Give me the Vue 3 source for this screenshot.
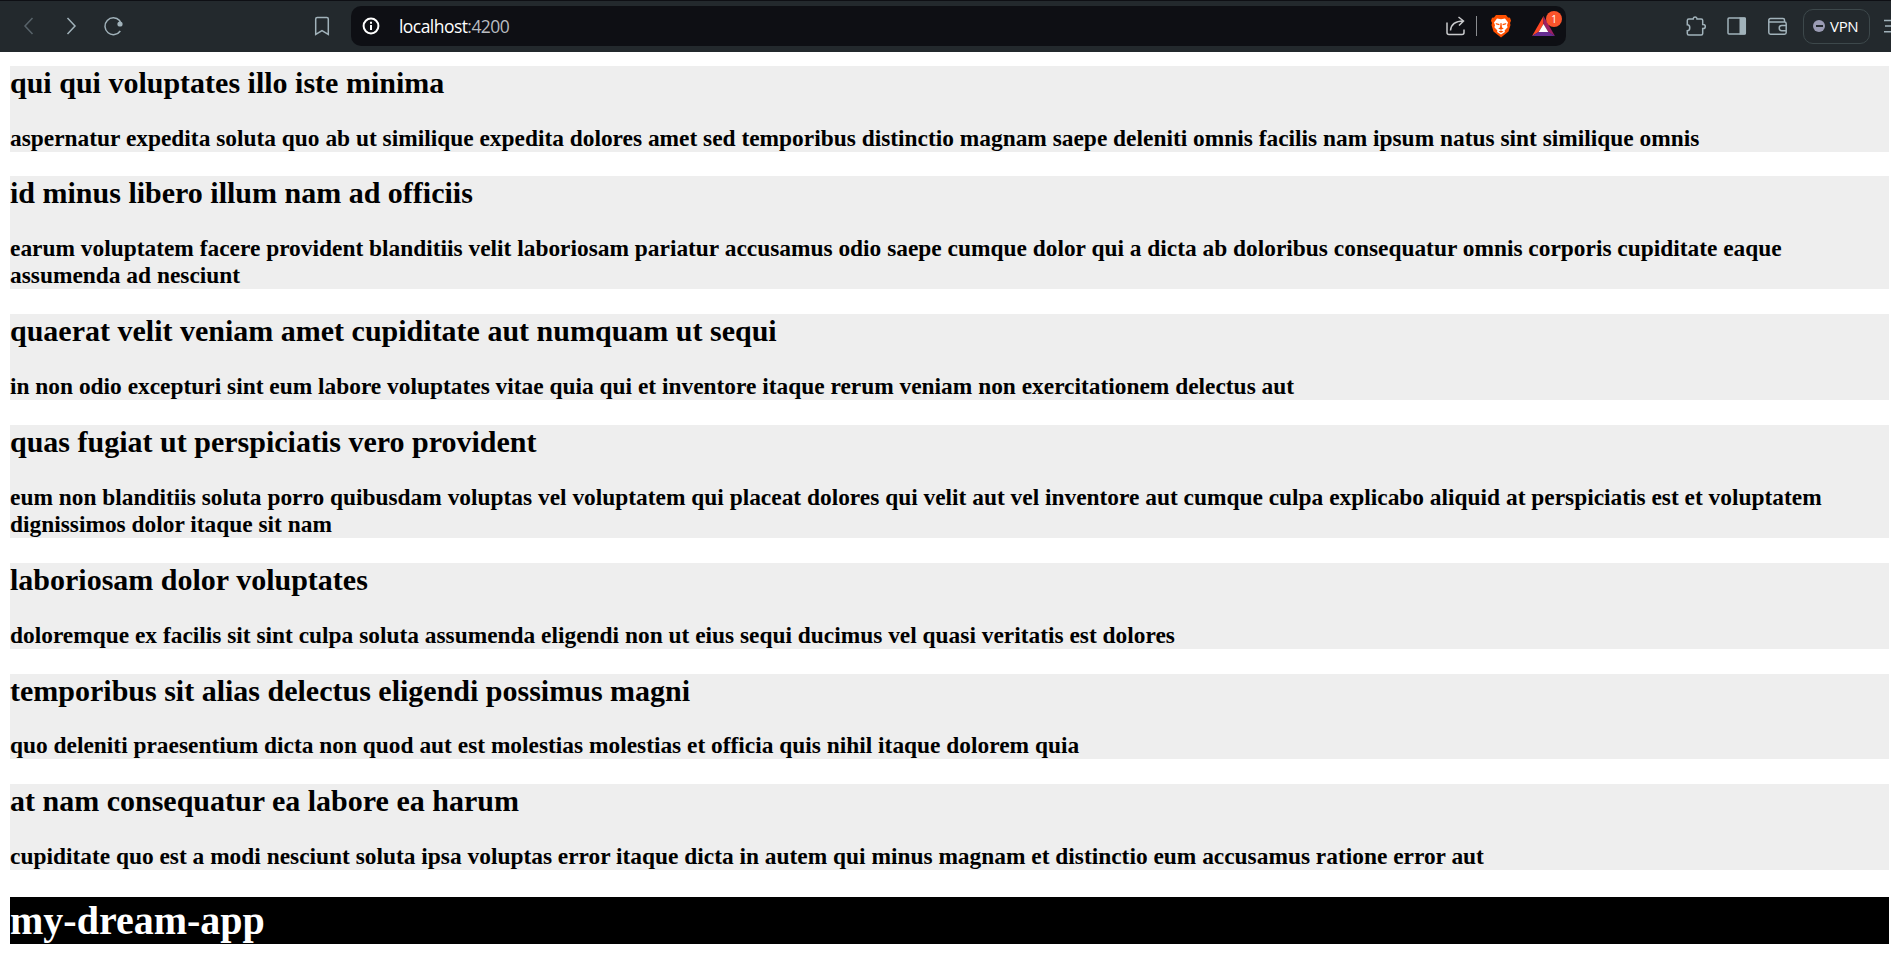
<script setup>
const posts = [
  { title: 'qui qui voluptates illo iste minima', body: 'aspernatur expedita soluta quo ab ut similique expedita dolores amet sed temporibus distinctio magnam saepe deleniti omnis facilis nam ipsum natus sint similique omnis' },
  { title: 'id minus libero illum nam ad officiis', body: 'earum voluptatem facere provident blanditiis velit laboriosam pariatur accusamus odio saepe cumque dolor qui a dicta ab doloribus consequatur omnis corporis cupiditate eaque assumenda ad nesciunt' },
  { title: 'quaerat velit veniam amet cupiditate aut numquam ut sequi', body: 'in non odio excepturi sint eum labore voluptates vitae quia qui et inventore itaque rerum veniam non exercitationem delectus aut' },
  { title: 'quas fugiat ut perspiciatis vero provident', body: 'eum non blanditiis soluta porro quibusdam voluptas vel voluptatem qui placeat dolores qui velit aut vel inventore aut cumque culpa explicabo aliquid at perspiciatis est et voluptatem dignissimos dolor itaque sit nam' },
  { title: 'laboriosam dolor voluptates', body: 'doloremque ex facilis sit sint culpa soluta assumenda eligendi non ut eius sequi ducimus vel quasi veritatis est dolores' },
  { title: 'temporibus sit alias delectus eligendi possimus magni', body: 'quo deleniti praesentium dicta non quod aut est molestias molestias et officia quis nihil itaque dolorem quia' },
  { title: 'at nam consequatur ea labore ea harum', body: 'cupiditate quo est a modi nesciunt soluta ipsa voluptas error itaque dicta in autem qui minus magnam et distinctio eum accusamus ratione error aut' },
]
</script>

<template>
  <div class="window">
    <header class="toolbar">
      <nav class="nav">
        <svg class="dim" width="20" height="24" viewBox="0 0 20 24"><path d="M13.500 4 6 12l7.500 8" /></svg>
        <svg width="20" height="24" viewBox="0 0 20 24"><path d="M6.500 4 14 12l-7.500 8" /></svg>
        <svg width="20" height="24" viewBox="0 0 20 24"><path d="M17.300 17A8.400 8.400 0 1 1 16.600 6.600L17.500 8.500" /><circle class="fill" cx="17" cy="10" r="2.600" /></svg>
      </nav>
      <svg class="bookmark" width="16" height="24" viewBox="0 0 16 24"><path d="M3.200 3.500h9.600q1.500 0 1.500 1.500v15.500L8 16.700l-6.300 3.800V5q0-1.500 1.500-1.500z" /></svg>
      <div class="address">
        <svg class="info" width="20" height="20" viewBox="0 0 20 20"><circle cx="10" cy="10" r="7.400" /><path d="M10 9v5M10 5.700v2" /></svg>
        <span class="url">localhost<span class="port">:4200</span></span>
        <svg class="share" width="22" height="22" viewBox="0 0 22 22"><path d="M2 7.500v10q0 2 2 2h13q2 0 2-2v-3M5.500 15.500C6 9.500 9.500 6 18.500 6M13.500 2l5 4-4.500 4.500" /></svg>
        <i class="divider"></i>
        <svg class="lion" width="22" height="24" viewBox="0 0 22 24">
          <path fill="#ff5000" d="M6 1h10l2 2.500 2 .2 1 3-1 2.300.5 2-2 6.500L11 23.500 3.500 17.500l-2-6.500.5-2-1-2.300 1-3 2-.2z" />
          <path fill="#fff" d="m7 4.500 4 .8 4-.8 3 4-1 2.700.6 2-3 3.200.3 1.500L11 20.500 7.100 18l.3-1.600-3-3.200.6-2L4 8.500z" />
          <path fill="#ff5000" d="m5.500 9 4 1-.2 1.200-3-.6zm11 0-4 1 .2 1.200 3-.6zM10.500 9h1l.5 4.500 1.800 1-2.800 1.300-2.800-1.300 1.800-1zM8.500 17.500l2.500-.9 2.500.9-2.500 1.200z" />
        </svg>
        <div class="bat">
          <svg width="23" height="20" viewBox="0 0 24 21">
            <path fill="#ff4724" d="M12 0 0 21l7-4.200 5-8.300z" /><path fill="#9e1f63" d="m12 0 12 21-7-4.200-5-8.300z" /><path fill="#662d91" d="M0 21h24l-7-4.400H7z" /><path fill="#fff" d="m12 8.300 5 8.400H7z" />
          </svg>
          <span class="badge">1</span>
        </div>
      </div>
      <div class="tools">
        <svg width="24" height="24" viewBox="0 0 24 24"><path d="M4.800 5h4.400v-.5a2 2 0 0 1 3.800 0V5h4.200q1.500 0 1.500 1.500v3.900h.5a2 2 0 0 1 0 4.200h-.5v4.900q0 1.500-1.500 1.500H4.800q-1.500 0-1.500-1.500v-2.700c3.300 0 3.300-6 0-6V6.500q0-1.500 1.500-1.500z" /></svg>
        <svg width="24" height="24" viewBox="0 0 24 24"><rect x="3" y="4" width="17.300" height="16" rx="1" /><path class="fill" d="M14.500 3.500H20q1 0 1 1v15q0 1-1 1h-5.500z" /></svg>
        <svg width="24" height="24" viewBox="0 0 24 24"><path d="M18.500 8V6q0-1.500-1.500-1.500H4.500Q2.800 4.500 2.800 6.200v12.300q0 1.700 1.700 1.700h14q1.700 0 1.700-1.700V9.700q0-1.700-1.700-1.700H3.500M20 11.500h-4.200a2.600 2.600 0 0 0 0 5.200H20" /></svg>
      </div>
      <div class="vpn"><i class="status"></i>VPN</div>
      <svg class="menu" width="7" height="16" viewBox="0 0 7 16"><path d="M0 2.500h7M1 8h6M0 13.700h7" /></svg>
    </header>
    <main class="page">
      <article v-for="post in posts" :key="post.title" class="post">
        <h2>{{ post.title }}</h2>
        <h3>{{ post.body }}</h3>
      </article>
      <h1>my-dream-app</h1>
    </main>
  </div>
</template>

<style>
body { background: #fff; overflow: hidden; }
</style>

<style scoped>
.window { height: 962px; overflow: hidden; background: #fff; font-family: "Liberation Serif", serif; }
.toolbar { display: flex; align-items: center; box-sizing: border-box; height: 52px; padding-bottom: 1px; border-top: 1px solid #0e0f14; background: #23292d; overflow: hidden; }
.toolbar > * { flex: none; }
.toolbar svg { flex: none; fill: none; stroke: #a1b2ba; stroke-width: 1.5; }
.toolbar .fill { fill: #a1b2ba; stroke: none; }
.toolbar .dim { stroke: #58636a; }
.nav { display: flex; gap: 22px; margin-left: 19px; }
.bookmark { margin: 0 21px 0 191px; }
.address { display: flex; align-items: center; box-sizing: border-box; width: 1215px; height: 40px; padding-left: 10px; border-radius: 10px; background: #0e0f14; color: #fff; font: 17.5px/24px "Open Sans", "Noto Sans", sans-serif; }
.toolbar .info { stroke: #fff; stroke-width: 2; }
.url { flex: none; margin-left: 18px; width: 1046px; letter-spacing: -0.55px; }
.port { color: #b9bcc0; }
.toolbar .share { stroke: #c9cacc; }
.divider { flex: none; width: 1px; height: 20px; margin: 0 13px 0 9px; background: #8a8c90; }
.toolbar .lion, .toolbar .bat svg { stroke: none; }
.bat { position: relative; display: flex; margin-left: 20px; }
.badge { position: absolute; left: 14px; top: -5px; width: 16px; height: 16px; border-radius: 50%; background: #fb542b; font-size: 10px; line-height: 16px; text-align: center; }
.tools { display: flex; gap: 17px; margin-left: 118px; }
.vpn { display: flex; align-items: center; gap: 5px; box-sizing: border-box; width: 67px; height: 35px; margin-left: 13px; padding-left: 9px; border: 1px solid #3d484b; border-radius: 10px; color: #fff; font: 15px/20px "Open Sans", sans-serif; letter-spacing: -0.3px; }
.status { width: 12px; height: 12px; border-radius: 50%; background: linear-gradient(#23292d, #23292d) center / 7px 2px no-repeat #9a9bb3; }
.menu { margin-left: 14px; }
.page { padding: 14px 2px 0 10px; color: #000; }
.post { margin-bottom: 25px; background: #eee; }
.post:first-child { margin-bottom: 24px; }
h1, h2, h3 { margin: 0; font-weight: 700; }
h2 { margin-bottom: 25px; font-size: 30px; line-height: 34px; }
.post:nth-child(6) h2 { margin-bottom: 24px; }
h3 { font-size: 23.4px; line-height: 27px; }
h1 { margin-top: 27px; background: #000; color: #fff; font-size: 40px; line-height: 47px; }
</style>
